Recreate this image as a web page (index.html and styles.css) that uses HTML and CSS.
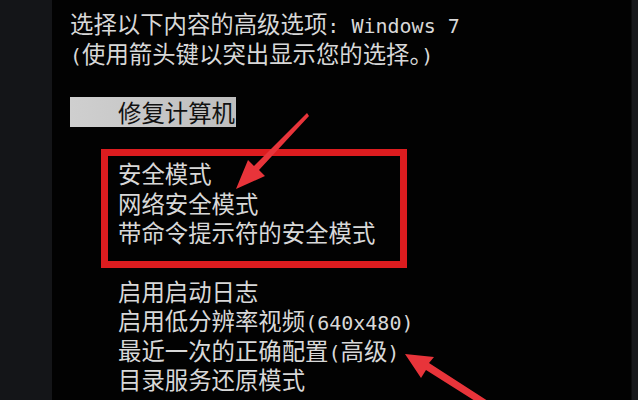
FILE: index.html
```html
<!DOCTYPE html>
<html lang="zh-CN">
<head>
  <meta charset="UTF-8" />
  <meta name="viewport" content="width=device-width, initial-scale=1" />
  <title>高级启动选项</title>
  <link rel="stylesheet" href="styles.css">
</head>
<body>

  <div class="side"></div>

  <div class="screen">
    <div class="line">选择以下内容的高级选项<span class="en">: Windows 7</span></div>
    <div class="line"><span class="en">(</span>使用箭头键以突出显示您的选择。<span class="en">)</span></div>

    <div class="selected">修复计算机</div>

    <!-- safe mode group -->
    <div class="redbox">
      <div class="line">安全模式</div>
      <div class="line">网络安全模式</div>
      <div class="line">带命令提示符的安全模式</div>
    </div>

    <div class="menu">
      <div class="line">启用启动日志</div>
      <div class="line">启用低分辨率视频<span class="en">(640x480)</span></div>
      <div class="line">最近一次的正确配置<span class="en">(</span>高级<span class="en">)</span></div>
      <div class="line">目录服务还原模式</div>
    </div>

    <svg class="arrows" width="638" height="400" viewBox="0 0 638 400">
      <polygon points="307,113 309,116 259,170 265,176 236,189 248,160 254,166" fill="#e8343a" />
      <polygon points="505,412 502,418 426,370 421,378 405,354 434,357 429,363" fill="#e8343a" />
    </svg>
  </div>

  <div class="edge"></div>

</body>
</html>
```

FILE: styles.css
```css
* {
  box-sizing: border-box;
}
body {
  margin: 0;
  height: 400px;
  display: flex;
  overflow: hidden;
  background: #000;
  font-family: "Noto Sans CJK SC", sans-serif;
  font-size: 23.4px;
  color: #d8d8d8;
}
.side {
  width: 52px;
  background: #141518;
}
.edge {
  width: 7px;
  background: #17181b;
  border-left: 1px solid #0c0c0e;
}
.screen {
  flex: 1;
  position: relative;
  padding: 9px 0 0 18px;
  background: #020202;
}
.line {
  height: 29.5px;
  line-height: 29.5px;
  white-space: nowrap;
}
.en {
  font-family: "DejaVu Sans Mono", monospace;
  font-size: 20px;
}
.selected {
  width: 166px;
  height: 30px;
  line-height: 31px;
  margin-top: 29px;
  padding-left: 48px;
  background: linear-gradient(90deg, #cfcfcf, #bebebe);
  color: #111;
}
.redbox {
  width: 306px;
  margin: 22px 0 0 31px;
  padding: 3px 0 13px 10px;
  border: 7px solid #dc1c1f;
}
.menu {
  margin-top: 9px;
  padding-left: 48px;
}
.arrows {
  position: absolute;
  left: -52px;
  top: 0;
}
```
